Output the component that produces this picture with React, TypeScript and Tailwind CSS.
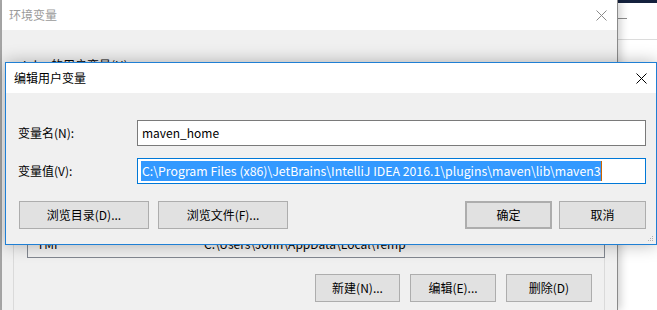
import React from "react";

const font = { fontFamily: '"Noto Sans CJK SC", "Noto Sans", sans-serif' };

function XIcon({ color, size = 11 }: { color: string; size?: number }) {
  return (
    <svg width={size} height={size} viewBox="0 0 11 11">
      <path d="M0.5 0.5 L10.5 10.5 M10.5 0.5 L0.5 10.5" stroke={color} strokeWidth="1" />
    </svg>
  );
}

function WinButton({ children, className = "" }: { children: React.ReactNode; className?: string }) {
  return (
    <div
      className={
        "flex h-[28px] items-center justify-center border border-[#adadad] bg-[#e1e1e1] text-[12px] text-black " +
        className
      }
    >
      {children}
    </div>
  );
}

export default function App() {
  return (
    <div className="relative h-[310px] w-[657px] overflow-hidden bg-white" style={font}>
      {/* desktop layers */}
      <div className="flex h-full w-full">
        <div className="h-full w-[2px] bg-[#a8a8a8]" />
        {/* Background window 环境变量 */}
        <div className="relative z-[1] flex h-full w-[616px] flex-col border-r border-[#8a8a8a] bg-[#f0f0f0] shadow-[3px_0_8px_rgba(0,0,0,0.18)]">
          <div className="flex h-[30px] items-center justify-between bg-white pl-[7px] pr-[10px]">
            <span className="text-[12px] text-[#9a9a9a]">环境变量</span>
            <XIcon color="#8a8a8a" />
          </div>
          <div className="flex flex-1 flex-col">
            <div className="pl-[18px] pt-[27px] text-[12px] leading-[16px] text-black">John 的用户变量(U)</div>
            <div className="ml-[11px] mr-[12px] flex flex-1 flex-col border-x border-[#dadada] pb-[8px]">
              <div className="ml-[13px] mr-[-1px] mt-[1px] flex h-[184px] flex-col justify-end border border-[#828790] bg-[#f0f0f0] pb-[6px]">
                <div className="flex text-[12px] leading-[14px] text-black">
                  <span className="w-[176px] pl-[9px]">TMP</span>
                  <span>C:\Users\John\AppData\Local\Temp</span>
                </div>
              </div>
              <div className="mr-[12px] mt-[16px] flex justify-end gap-[10px]">
                <WinButton className="w-[85px]">新建(N)...</WinButton>
                <WinButton className="w-[86px]">编辑(E)...</WinButton>
                <WinButton className="w-[86px]">删除(D)</WinButton>
              </div>
            </div>
          </div>
        </div>
        {/* Window behind at right */}
        <div className="flex h-full flex-1 flex-col bg-white">
          <div className="h-[3px] bg-[#14213d]" />
          <div className="mt-[15px] h-px w-[9px] bg-[#8c8c8c]" />
          <div className="mt-[20px] h-px w-full bg-[#dcdcdc]" />
        </div>
      </div>

      {/* Dialog 编辑用户变量 */}
      <div className="absolute left-[5px] top-[62px] z-10 flex w-[652px] flex-col border border-[#1f7fd4] bg-[#f0f0f0] shadow-[0_0_16px_rgba(0,0,0,0.28)]">
        <div className="flex h-[30px] items-center justify-between bg-white pl-[8px] pr-[9px]">
          <span className="text-[12px] text-black">编辑用户变量</span>
          <XIcon color="#000" />
        </div>
        <div className="flex flex-col pb-[15px] pl-[12px] pr-[10px] pt-[27px]">
          <div className="flex h-[26px] items-center">
            <span className="w-[119px] text-[12px] text-black">变量名(N):</span>
            <div className="flex h-[26px] flex-1 items-center border border-[#7a7a7a] bg-white pl-[4px] text-[12px] text-black">
              maven_home
            </div>
          </div>
          <div className="mt-[12px] flex h-[26px] items-center">
            <span className="w-[119px] text-[12px] text-black">变量值(V):</span>
            <div className="flex h-[26px] flex-1 items-center border border-[#0078d7] bg-white pl-[3px]">
              <span className="flex h-[20px] items-center whitespace-nowrap bg-[#3399ff] pl-[1px] text-[12.3px] text-white">
                C:\Program Files (x86)\JetBrains\IntelliJ IDEA 2016.1\plugins\maven\lib\maven3
              </span>
              <span className="h-[20px] w-px bg-[#cc6600]" />
            </div>
          </div>
          <div className="mt-[17px] flex items-center pl-[1px]">
            <WinButton className="w-[130px]">浏览目录(D)...</WinButton>
            <WinButton className="ml-[9px] w-[130px]">浏览文件(F)...</WinButton>
            <div className="flex-1" />
            <WinButton className="w-[87px] border-2 border-[#0078d7]">确定</WinButton>
            <WinButton className="ml-[7px] w-[87px]">取消</WinButton>
          </div>
        </div>
        {/* resize grip */}
        <svg className="absolute bottom-[2px] right-[2px]" width="7" height="7" viewBox="0 0 7 7">
          <rect x="5" y="1" width="1" height="1" fill="#b0b0b0" />
          <rect x="3" y="3" width="1" height="1" fill="#b0b0b0" />
          <rect x="5" y="3" width="1" height="1" fill="#b0b0b0" />
          <rect x="1" y="5" width="1" height="1" fill="#b0b0b0" />
          <rect x="3" y="5" width="1" height="1" fill="#b0b0b0" />
          <rect x="5" y="5" width="1" height="1" fill="#b0b0b0" />
        </svg>
      </div>
    </div>
  );
}
